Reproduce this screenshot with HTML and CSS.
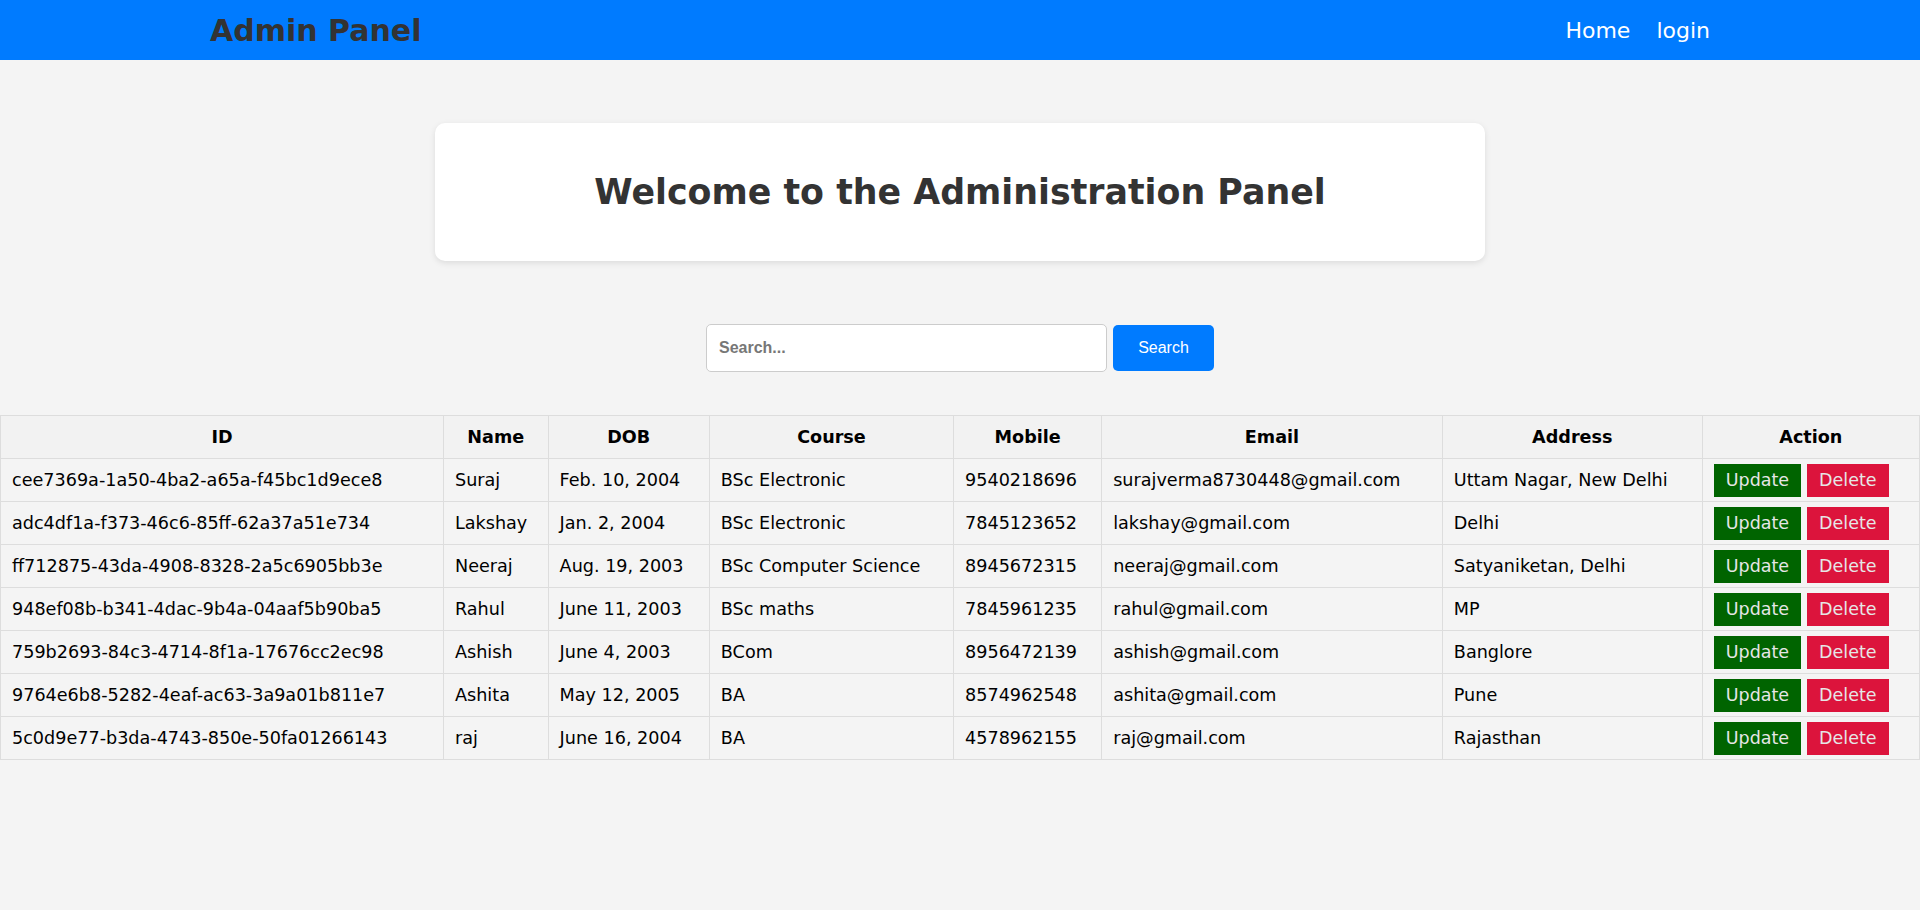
FILE: index.html
```html
<!DOCTYPE html>
<html lang="en">
<head>
<meta charset="utf-8">
<title>Admin Panel</title>
<link rel="stylesheet" href="styles.css">
</head>
<body>
<header class="topbar">
  <div class="topbar-inner">
    <h1 class="brand">Admin Panel</h1>
    <nav class="nav">
      <a href="#" class="nav-link">Home</a>
      <a href="#" class="nav-link">login</a>
    </nav>
  </div>
</header>

<section class="welcome">
  <h2 class="welcome-title">Welcome to the Administration Panel</h2>
</section>

<form class="search">
  <input class="search-input" type="text" placeholder="Search...">
  <button class="search-btn" type="button">Search</button>
</form>

<table class="data">
  <thead>
    <tr>
      <th class="col-id">ID</th><th>Name</th><th>DOB</th><th>Course</th><th>Mobile</th><th>Email</th><th>Address</th><th>Action</th>
    </tr>
  </thead>
  <tbody>
    <tr><td>cee7369a-1a50-4ba2-a65a-f45bc1d9ece8</td><td>Suraj</td><td>Feb. 10, 2004</td><td>BSc Electronic</td><td>9540218696</td><td>surajverma8730448@gmail.com</td><td>Uttam Nagar, New Delhi</td><td class="actions"><div class="btns"><a class="btn btn-update" href="#">Update</a><a class="btn btn-delete" href="#">Delete</a></div></td></tr>
    <tr><td>adc4df1a-f373-46c6-85ff-62a37a51e734</td><td>Lakshay</td><td>Jan. 2, 2004</td><td>BSc Electronic</td><td>7845123652</td><td>lakshay@gmail.com</td><td>Delhi</td><td class="actions"><div class="btns"><a class="btn btn-update" href="#">Update</a><a class="btn btn-delete" href="#">Delete</a></div></td></tr>
    <tr><td>ff712875-43da-4908-8328-2a5c6905bb3e</td><td>Neeraj</td><td>Aug. 19, 2003</td><td>BSc Computer Science</td><td>8945672315</td><td>neeraj@gmail.com</td><td>Satyaniketan, Delhi</td><td class="actions"><div class="btns"><a class="btn btn-update" href="#">Update</a><a class="btn btn-delete" href="#">Delete</a></div></td></tr>
    <tr><td>948ef08b-b341-4dac-9b4a-04aaf5b90ba5</td><td>Rahul</td><td>June 11, 2003</td><td>BSc maths</td><td>7845961235</td><td>rahul@gmail.com</td><td>MP</td><td class="actions"><div class="btns"><a class="btn btn-update" href="#">Update</a><a class="btn btn-delete" href="#">Delete</a></div></td></tr>
    <tr><td>759b2693-84c3-4714-8f1a-17676cc2ec98</td><td>Ashish</td><td>June 4, 2003</td><td>BCom</td><td>8956472139</td><td>ashish@gmail.com</td><td>Banglore</td><td class="actions"><div class="btns"><a class="btn btn-update" href="#">Update</a><a class="btn btn-delete" href="#">Delete</a></div></td></tr>
    <tr><td>9764e6b8-5282-4eaf-ac63-3a9a01b811e7</td><td>Ashita</td><td>May 12, 2005</td><td>BA</td><td>8574962548</td><td>ashita@gmail.com</td><td>Pune</td><td class="actions"><div class="btns"><a class="btn btn-update" href="#">Update</a><a class="btn btn-delete" href="#">Delete</a></div></td></tr>
    <tr><td>5c0d9e77-b3da-4743-850e-50fa01266143</td><td>raj</td><td>June 16, 2004</td><td>BA</td><td>4578962155</td><td>raj@gmail.com</td><td>Rajasthan</td><td class="actions"><div class="btns"><a class="btn btn-update" href="#">Update</a><a class="btn btn-delete" href="#">Delete</a></div></td></tr>
  </tbody>
</table>
</body>
</html>
```

FILE: styles.css
```css
* { box-sizing: border-box; }

body {
  margin: 0;
  background: #f4f4f4;
  font-family: "DejaVu Sans", Verdana, sans-serif;
  color: #000;
}

.topbar {
  background: #007bff;
  height: 60px;
}

.topbar-inner {
  max-width: 1500px;
  height: 100%;
  margin: 0 auto;
  display: flex;
  align-items: center;
  justify-content: space-between;
}

.brand {
  margin: 0;
  font-size: 30px;
  font-weight: bold;
  color: #333;
}

.nav {
  display: flex;
  gap: 26px;
}

.nav-link {
  color: #fff;
  text-decoration: none;
  font-size: 22px;
}

.welcome {
  width: 1050px;
  margin: 63px auto 0;
  height: 138px;
  background: #fff;
  border-radius: 10px;
  box-shadow: 0 2px 6px rgba(0, 0, 0, 0.1);
  display: flex;
  align-items: center;
  justify-content: center;
}

.welcome-title {
  margin: 0;
  font-size: 34.8px;
  font-weight: bold;
  color: #333;
}

.search {
  display: flex;
  justify-content: center;
  align-items: center;
  gap: 6px;
  margin: 63px 0 43px;
}

.search-input {
  width: 401px;
  height: 48px;
  padding: 0 12px;
  border: 1px solid #ccc;
  border-radius: 5px;
  background: #fff;
  font-family: "Liberation Sans", Arial, sans-serif;
  font-size: 16px;
  font-weight: bold;
}

.search-input::placeholder {
  color: #777;
}

.search-btn {
  width: 101px;
  height: 46px;
  border: none;
  border-radius: 5px;
  background: #007bff;
  color: #fff;
  font-family: "Liberation Sans", Arial, sans-serif;
  font-size: 16px;
}

.data {
  width: 100%;
  border-collapse: collapse;
  font-size: 17.6px;
}

.data th,
.data td {
  border: 1px solid #ddd;
  padding: 11px;
  text-align: left;
  white-space: nowrap;
}

.data th {
  background: #f2f2f2;
  text-align: center;
  font-weight: bold;
}

.data th.col-id {
  width: 443px;
}

.data td.actions {
  padding: 4px 11px;
}

.btns {
  display: flex;
  gap: 6px;
}

.btn {
  display: inline-block;
  padding: 6px 12px;
  color: #e6e6e6;
  text-decoration: none;
  font-size: 17.5px;
  line-height: 21px;
}

.btn-update { background: #006400; }
.btn-delete { background: #dc143c; }
```
